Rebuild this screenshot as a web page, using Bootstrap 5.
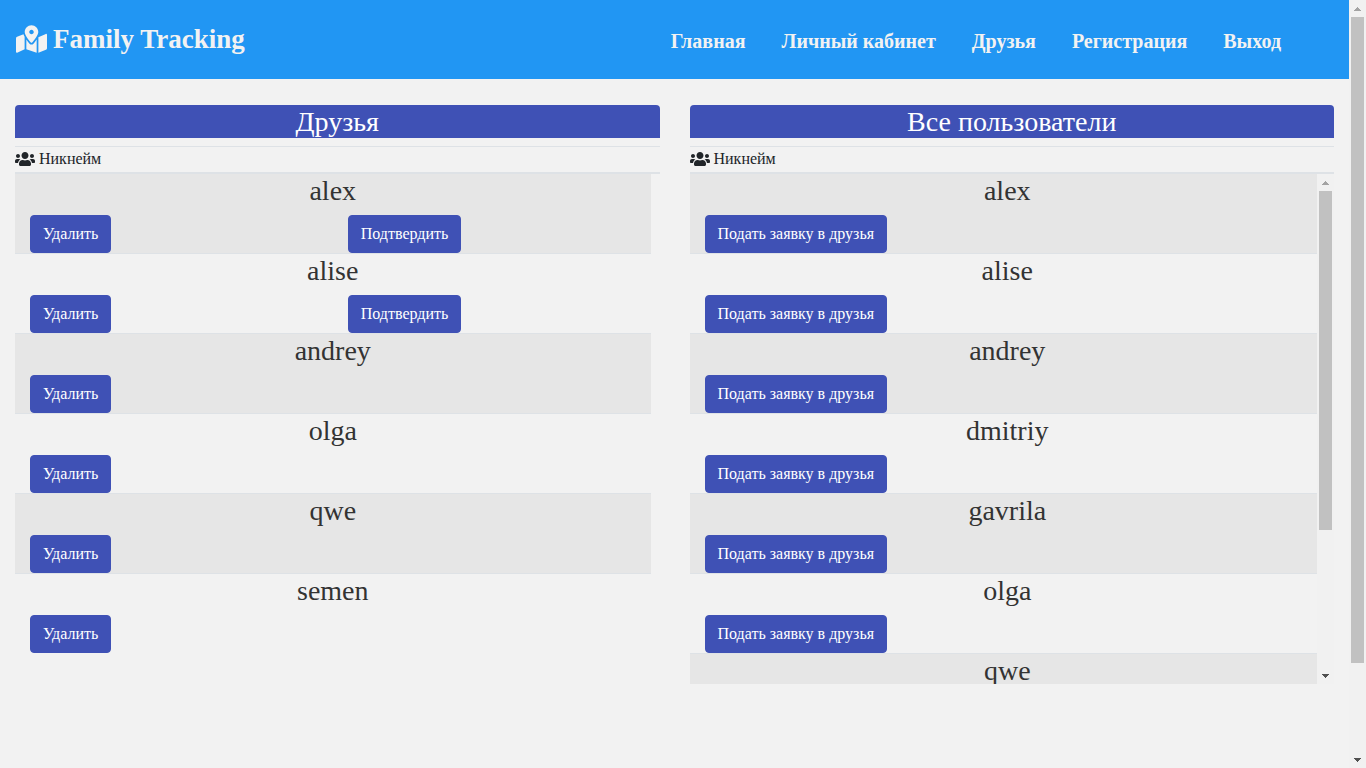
<!DOCTYPE html>
<html lang="ru">
<head>
<meta charset="utf-8">
<meta name="viewport" content="width=device-width, initial-scale=1">
<title>Family Tracking</title>
<link href="https://cdn.jsdelivr.net/npm/bootstrap@5.3.0/dist/css/bootstrap.min.css" rel="stylesheet">
<style>
body { background: #f2f2f2; color: #212529; font-family: "Liberation Serif", "Times New Roman", serif; font-size: 16px; }
.topbar { background: #2196f3; min-height: 79px; padding: 0 52px 0 16px; }
.topbar a { color: #f2f2f2; font-weight: 700; }
.site-brand { font-size: 27px; line-height: 40px; gap: 6px; padding-bottom: 2px; }
.site-brand svg { width: 31px; height: 28px; }
.topbar .nav-link { font-size: 20px; line-height: 30px; padding: 3px 16px 0; }
.site-menu { gap: 4px; }
.panels { padding: 26px 15px 0; }
.panels .row { --bs-gutter-x: 30px; }
.panel-title { background: #3f51b5; color: #fff; font-size: 28px; line-height: 33px; border-radius: 4px 4px 0 0; }
.panel-head { border-top: 1px solid #dee2e6; border-bottom: 2px solid #dee2e6; line-height: 23px; padding-bottom: 2px; gap: 4px; }
.panel-head svg { width: 20px; height: 16px; }
.user-list { border-collapse: separate; border-spacing: 0; }
.user-list td { padding: 0; border-bottom: 1px solid #dee2e6; }
.user-list tr:nth-child(odd) td { background: #e6e6e6; }
.user-list tr:last-child td { border-bottom: 0; }
.user-name { font-size: 28px; line-height: 33px; color: #333; }
.user-list .row { margin: 0; }
.btn-indigo { --bs-btn-color: #fff; --bs-btn-bg: #3f51b5; --bs-btn-border-color: #3f51b5; --bs-btn-hover-color: #fff; --bs-btn-hover-bg: #35449a; --bs-btn-border-radius: 4px; }
.friends-body { padding-right: 9px; }
.all-body { height: 510px; }
.all-body .user-name { padding-left: 8px; }
.scroll-track { width: 17px; background: #f1f1f1; }
.scroll-track svg { width: 17px; height: 17px; flex: none; }
.scroll-thumb { width: 13px; background: #c1c1c1; }
.thumb-page { flex: 0 0 646px; }
.thumb-list { flex: 0 0 339px; }
</style>
</head>
<body class="vh-100 d-flex overflow-hidden">
<div class="flex-grow-1 overflow-hidden">
  <header class="topbar d-flex align-items-center justify-content-between">
    <a class="site-brand d-flex align-items-center text-decoration-none" href="#">
      <svg viewBox="0 0 576 512" fill="currentColor" aria-hidden="true"><path d="M288 0c-69.59 0-126 56.41-126 126 0 56.26 82.35 158.8 113.9 196.02 6.39 7.54 17.82 7.54 24.2 0C331.65 284.8 414 182.26 414 126 414 56.41 357.59 0 288 0zm0 168c-23.2 0-42-18.8-42-42s18.8-42 42-42 42 18.8 42 42-18.8 42-42 42zM20.12 215.95A32.006 32.006 0 0 0 0 245.66v250.32c0 11.32 11.43 19.06 21.94 14.86L160 448V214.92c-8.84-15.98-16.07-31.54-21.25-46.42L20.12 215.95zM288 359.67c-14.07 0-27.38-6.18-36.51-16.96-19.66-23.2-40.57-49.62-59.49-76.72v182l192 64V266c-18.92 27.09-39.82 53.52-59.49 76.72-9.13 10.77-22.44 16.95-36.51 16.95zm266.06-198.51L416 224v288l139.88-55.95A31.996 31.996 0 0 0 576 426.34V176.02c0-11.32-11.43-19.06-21.94-14.86z"/></svg>
      <span>Family Tracking</span>
    </a>
    <nav class="site-menu nav flex-nowrap">
      <a class="nav-link" href="#">Главная</a>
      <a class="nav-link" href="#">Личный кабинет</a>
      <a class="nav-link" href="#">Друзья</a>
      <a class="nav-link" href="#">Регистрация</a>
      <a class="nav-link" href="#">Выход</a>
    </nav>
  </header>
  <main class="panels">
    <div class="row">
      <section class="col-6">
        <h3 class="panel-title text-center fw-normal mb-2">Друзья</h3>
        <div class="panel-head d-flex align-items-center">
          <svg viewBox="0 0 640 512" fill="currentColor" aria-hidden="true"><path id="users" d="M96 224c35.3 0 64-28.7 64-64s-28.7-64-64-64-64 28.7-64 64 28.7 64 64 64zm448 0c35.3 0 64-28.7 64-64s-28.7-64-64-64-64 28.7-64 64 28.7 64 64 64zm32 32h-64c-17.6 0-33.5 7.1-45.1 18.6 40.3 22.1 68.9 62 75.1 109.4h66c17.7 0 32-14.3 32-32v-32c0-35.3-28.7-64-64-64zm-256 0c61.9 0 112-50.1 112-112S381.9 32 320 32 208 82.1 208 144s50.1 112 112 112zm76.8 32h-8.3c-20.8 10-43.9 16-68.5 16s-47.6-6-68.5-16h-8.3C179.6 288 128 339.6 128 403.2V432c0 26.5 21.5 48 48 48h288c26.5 0 48-21.5 48-48v-28.8c0-63.6-51.6-115.2-115.2-115.2zm-223.7-13.4C161.5 263.1 145.6 256 128 256H64c-35.3 0-64 28.7-64 64v32c0 17.7 14.3 32 32 32h65.9c6.3-47.4 34.9-87.3 75.2-109.4z"/></svg>
          <span>Никнейм</span>
        </div>
        <div class="friends-body">
          <table class="user-list w-100">
            <tbody>
              <tr><td><h3 class="user-name text-center fw-normal mb-2">alex</h3><div class="row"><div class="col-6"><button type="button" class="btn btn-indigo d-block">Удалить</button></div><div class="col-6"><button type="button" class="btn btn-indigo d-block">Подтвердить</button></div></div></td></tr>
              <tr><td><h3 class="user-name text-center fw-normal mb-2">alise</h3><div class="row"><div class="col-6"><button type="button" class="btn btn-indigo d-block">Удалить</button></div><div class="col-6"><button type="button" class="btn btn-indigo d-block">Подтвердить</button></div></div></td></tr>
              <tr><td><h3 class="user-name text-center fw-normal mb-2">andrey</h3><div class="row"><div class="col-6"><button type="button" class="btn btn-indigo d-block">Удалить</button></div></div></td></tr>
              <tr><td><h3 class="user-name text-center fw-normal mb-2">olga</h3><div class="row"><div class="col-6"><button type="button" class="btn btn-indigo d-block">Удалить</button></div></div></td></tr>
              <tr><td><h3 class="user-name text-center fw-normal mb-2">qwe</h3><div class="row"><div class="col-6"><button type="button" class="btn btn-indigo d-block">Удалить</button></div></div></td></tr>
              <tr><td><h3 class="user-name text-center fw-normal mb-2">semen</h3><div class="row"><div class="col-6"><button type="button" class="btn btn-indigo d-block">Удалить</button></div></div></td></tr>
            </tbody>
          </table>
        </div>
      </section>
      <section class="col-6">
        <h3 class="panel-title text-center fw-normal mb-2">Все пользователи</h3>
        <div class="panel-head d-flex align-items-center">
          <svg viewBox="0 0 640 512" fill="currentColor" aria-hidden="true"><use href="#users"/></svg>
          <span>Никнейм</span>
        </div>
        <div class="all-body d-flex overflow-hidden">
          <div class="flex-grow-1">
            <table class="user-list w-100">
              <tbody>
                <tr><td><h3 class="user-name text-center fw-normal mb-2">alex</h3><div class="row"><div class="col-12"><button type="button" class="btn btn-indigo d-block">Подать заявку в друзья</button></div></div></td></tr>
                <tr><td><h3 class="user-name text-center fw-normal mb-2">alise</h3><div class="row"><div class="col-12"><button type="button" class="btn btn-indigo d-block">Подать заявку в друзья</button></div></div></td></tr>
                <tr><td><h3 class="user-name text-center fw-normal mb-2">andrey</h3><div class="row"><div class="col-12"><button type="button" class="btn btn-indigo d-block">Подать заявку в друзья</button></div></div></td></tr>
                <tr><td><h3 class="user-name text-center fw-normal mb-2">dmitriy</h3><div class="row"><div class="col-12"><button type="button" class="btn btn-indigo d-block">Подать заявку в друзья</button></div></div></td></tr>
                <tr><td><h3 class="user-name text-center fw-normal mb-2">gavrila</h3><div class="row"><div class="col-12"><button type="button" class="btn btn-indigo d-block">Подать заявку в друзья</button></div></div></td></tr>
                <tr><td><h3 class="user-name text-center fw-normal mb-2">olga</h3><div class="row"><div class="col-12"><button type="button" class="btn btn-indigo d-block">Подать заявку в друзья</button></div></div></td></tr>
                <tr><td><h3 class="user-name text-center fw-normal mb-2">qwe</h3></td></tr>
              </tbody>
            </table>
          </div>
          <div class="scroll-track d-flex flex-column align-items-center flex-shrink-0" aria-hidden="true">
            <svg viewBox="0 0 17 17" shape-rendering="crispEdges"><path fill="#a3a3a3" d="M8 7h1v1h1v1h1v1h1v1H5v-1h1V9h1V8h1z"/></svg>
            <div class="scroll-thumb thumb-list"></div>
            <svg class="mt-auto" viewBox="0 0 17 17" shape-rendering="crispEdges"><path fill="#505050" d="M5 7h7v1h-1v1h-1v1H9v1H8v-1H7V9H6V8H5z"/></svg>
          </div>
        </div>
      </section>
    </div>
  </main>
</div>
<div class="scroll-track d-flex flex-column align-items-center flex-shrink-0" aria-hidden="true">
  <svg viewBox="0 0 17 17" shape-rendering="crispEdges"><path fill="#a3a3a3" d="M8 7h1v1h1v1h1v1h1v1H5v-1h1V9h1V8h1z"/></svg>
  <div class="scroll-thumb thumb-page"></div>
  <svg class="mt-auto" viewBox="0 0 17 17" shape-rendering="crispEdges"><path fill="#505050" d="M5 7h7v1h-1v1h-1v1H9v1H8v-1H7V9H6V8H5z"/></svg>
</div>
<script src="https://cdn.jsdelivr.net/npm/bootstrap@5.3.0/dist/js/bootstrap.bundle.min.js"></script>
</body>
</html>
